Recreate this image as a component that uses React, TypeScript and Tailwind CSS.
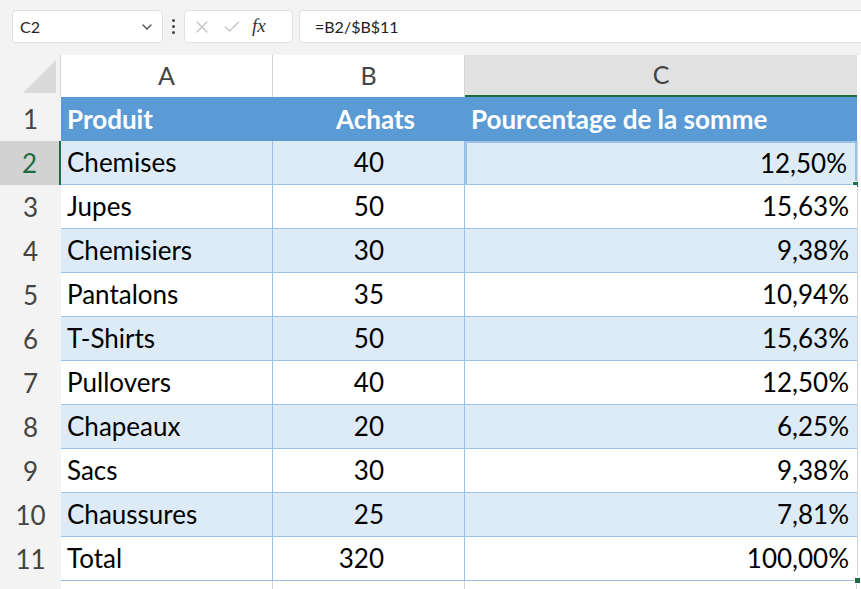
import { ChevronDown, X, Check } from "lucide-react";

const rows: [string, string, string][] = [
  ["Chemises", "40", "12,50%"],
  ["Jupes", "50", "15,63%"],
  ["Chemisiers", "30", "9,38%"],
  ["Pantalons", "35", "10,94%"],
  ["T-Shirts", "50", "15,63%"],
  ["Pullovers", "40", "12,50%"],
  ["Chapeaux", "20", "6,25%"],
  ["Sacs", "30", "9,38%"],
  ["Chaussures", "25", "7,81%"],
  ["Total", "320", "100,00%"],
];

const grid = "grid grid-cols-[61px_212px_192px_392px_4px]";

export default function App() {
  return (
    <div className="h-[589px] w-[861px] overflow-hidden bg-white text-[#222]" style={{ fontFamily: "Lato, 'Noto Sans', sans-serif" }}>
      <div className="flex h-[55px] items-start gap-0 bg-[#f3f3f3] pt-[10px]">
        <div className="ml-[12px] flex h-[33px] w-[151px] items-center justify-between rounded-[4px] border border-[#e0e0e0] bg-white px-[7px] text-[16px]">
          <span>C2</span>
          <ChevronDown className="h-4 w-4 text-[#444]" strokeWidth={1.8} />
        </div>
        <div className="mx-[9px] flex h-[33px] flex-col items-center justify-center gap-[3px]">
          <span className="h-[3px] w-[3px] rounded-full bg-[#444]" />
          <span className="h-[3px] w-[3px] rounded-full bg-[#444]" />
          <span className="h-[3px] w-[3px] rounded-full bg-[#444]" />
        </div>
        <div className="flex h-[33px] w-[109px] items-center gap-[10px] rounded-[4px] border border-[#e0e0e0] bg-white px-[7px]">
          <X className="h-5 w-5 text-[#bbb]" strokeWidth={1.3} />
          <Check className="h-5 w-5 text-[#bbb]" strokeWidth={1.3} />
          <span className="text-[19px] italic text-[#333]" style={{ fontFamily: "'Liberation Serif', serif" }}>fx</span>
        </div>
        <div className="ml-[6px] flex h-[33px] flex-1 items-center rounded-l-[4px] border border-r-0 border-[#e0e0e0] bg-white pl-[15px] text-[16px]">
          =B2/$B$11
        </div>
      </div>
      <div className={`${grid} h-[42px] bg-[#f3f3f3] text-[25px] text-[#444]`}>
        <div className="relative border-r border-[#d4d4d4]">
          <div className="absolute bottom-[4px] right-[4px] h-0 w-0 border-b-[33px] border-l-[33px] border-b-[#d9d9d9] border-l-transparent" />
        </div>
        <div className="flex items-center justify-center border-r border-[#d4d4d4] bg-white">A</div>
        <div className="flex items-center justify-center border-r border-[#d4d4d4] bg-white">B</div>
        <div className="flex items-center justify-center border-b-2 border-[#1e6b41] bg-[#e1e1e1]">C</div>
        <div className="bg-white" />
      </div>
      <div className={`${grid} h-[44px] text-[26px]`}>
        <div className="flex items-center justify-center bg-[#f3f3f3] text-[#444]">1</div>
        <div className="flex items-center bg-[#5b9bd5] px-[6px] font-bold text-white">Produit</div>
        <div className="flex items-center justify-end bg-[#5b9bd5] pr-[50px] font-bold text-white">Achats</div>
        <div className="flex items-center bg-[#5b9bd5] px-[6px] font-bold text-white">Pourcentage de la somme</div>
        <div />
      </div>
      {rows.map(([p, a, c], i) => {
        const band = i % 2 === 0 ? "bg-[#ddebf7]" : "bg-white";
        const active = i === 0;
        return (
          <div key={p} className={`${grid} h-[44px] text-[26px] text-black`}>
            <div className={`flex items-center justify-center ${active ? "border-r-2 border-[#1e6b41] bg-[#d2d2d2] text-[#1e6b41]" : "bg-[#f3f3f3] text-[#444]"}`}>{i + 2}</div>
            <div className={`flex items-center border-b border-r border-[#9bc2e6] px-[6px] ${band}`}>{p}</div>
            <div className={`flex items-center justify-end border-b border-r border-[#9bc2e6] pr-[80px] ${band}`}>{a}</div>
            <div className={`relative flex items-center justify-end border-b border-[#9bc2e6] px-[8px] ${band} ${active ? "border-2 border-[#1e6b41]" : ""}`}>
              {c}
              {(active || i === rows.length - 1) && (
                <span className="absolute -bottom-[4px] -right-[4px] h-[7px] w-[7px] border border-white bg-[#1e6b41] data-[x]:bg-[#4050b0]" />
              )}
            </div>
            <div className="border-l border-[#d4d4d4]" />
          </div>
        );
      })}
      <div className={`${grid} h-[10px]`}>
        <div className="bg-[#f3f3f3]" />
        <div className="border-r border-[#d4d4d4]" />
        <div className="border-r border-[#d4d4d4]" />
        <div className="border-r border-[#d4d4d4]" />
      </div>
    </div>
  );
}
